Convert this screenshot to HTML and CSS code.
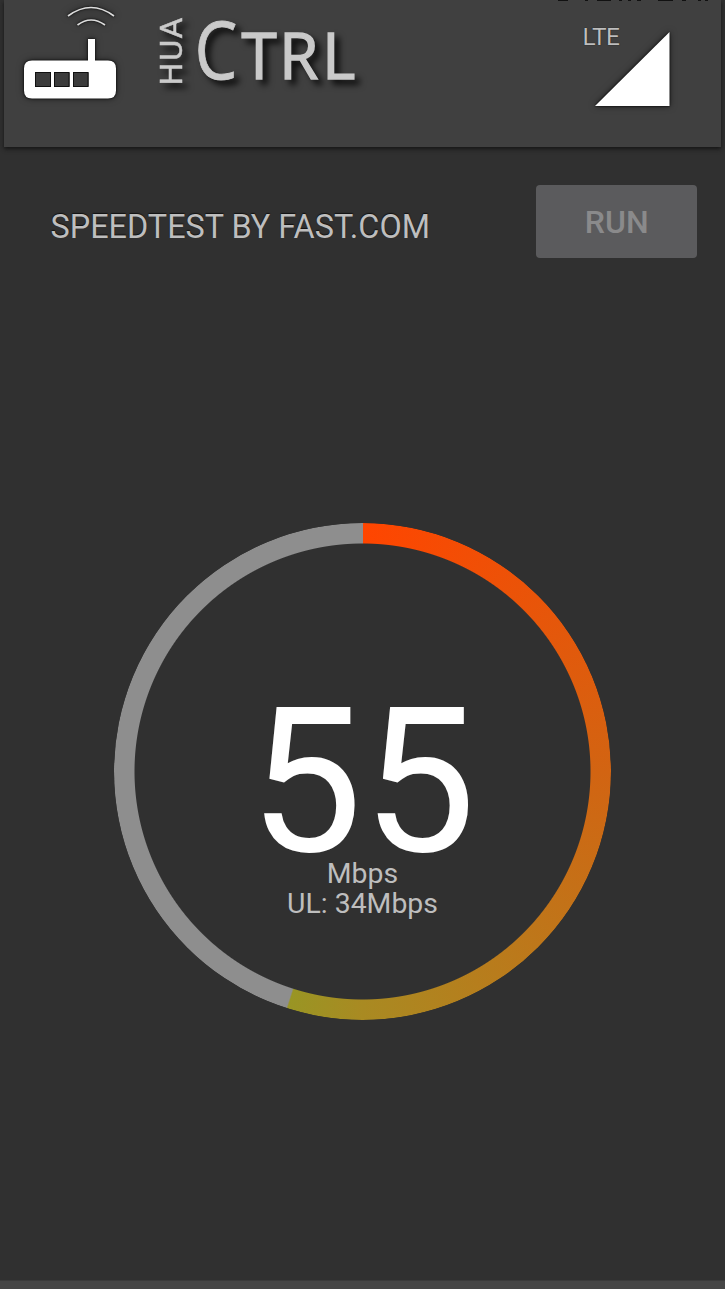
FILE: index.html
```
<!DOCTYPE html>
<html lang="en">

<head>
    <meta charset="UTF-8">
    <meta name="viewport" content="width=device-width, initial-scale=1.0">
    <title>HUA Ctrl</title>
    <link rel="stylesheet" href="styles.css">
</head>

<body>
    <header class="header">
        <!-- Router icon -->
        <svg class="router" width="112" height="112" viewBox="8 0 112 112">
            <g class="waves">
                <path d="M68 16Q91 -1 114 16" />
                <path d="M77.500 25Q91 15 105 25" />
            </g>
            <rect x="88" y="39" width="7" height="24" />
            <path fill-rule="evenodd" d="M32 60.500H108Q116 60.500 116 68.500V90.500Q116 98.500 108 98.500H32Q24 98.500 24 90.500V68.500Q24 60.500 32 60.500ZM35 72V87H51V72ZM54 72V87H69.500V72ZM73 72V87H88.500V72Z" />
            <path class="ports" d="M35.500 72.500H50.500V86.500H35.500ZM54.500 72.500H69V86.500H54.500ZM73.500 72.500H88V86.500H73.500Z" />
        </svg>

        <!-- Logo -->
        <svg class="logo" width="230" height="112" viewBox="150 0 230 112">
            <text class="hua" transform="translate(182 85.500) rotate(-90)" textLength="68">HUA</text>
            <text class="big" transform="translate(194.500 79) scale(.84 1)">C</text>
            <text class="small" y="79" x="241.500 279 322">TRL</text>
        </svg>

        <!-- Network status -->
        <div class="network">
            <span class="type">LTE</span>
            <svg class="signal" width="96" height="112" viewBox="584 0 96 112">
                <path d="M669.500 32V106H595Z" />
            </svg>
        </div>
        <svg class="statusbar" width="152" height="1" viewBox="0 0 152 1">
            <path d="M0 .500H10M27 .500H30M39 .500H53M61 .500H64M70 .500H73M79 .500H83M100 .500H115M124 .500H128M140 .500H143M147 .500H150" />
        </svg>
    </header>

    <main>
        <div class="titlebar">
            <h1>SPEEDTEST BY FAST.COM</h1>
            <button id="runBtn" disabled>RUN</button>
        </div>

        <!-- Speed gauge -->
        <div class="gauge">
            <div class="ring"></div>
            <div class="speed">55</div>
            <div class="unit">Mbps</div>
            <div class="unit">UL: 34Mbps</div>
        </div>
    </main>

    <footer class="bottombar"></footer>
</body>

</html>
```

FILE: styles.css
```
body {
    margin: 0;
    height: 1289px;
    display: flex;
    flex-direction: column;
    overflow: hidden;
    background-color: #303030;
    color: #bebebe;
    font-family: Roboto, sans-serif;
}

.header {
    height: 147px;
    margin: 0 4px;
    display: flex;
    align-items: flex-start;
    position: relative;
    background-color: #404040;
    box-shadow: 0 2px 4px #151515;
}
.router {
    margin-left: 4px;
    fill: #fff;
    filter: drop-shadow(0 0 1px #000) drop-shadow(0 0 3px rgba(0, 0, 0, 0.5));
}
.router .waves {
    fill: none;
    stroke: #ddd;
    stroke-width: 1.7;
}
.router .ports {
    fill: #3c3c3c;
    stroke: #111;
}

.logo {
    margin-left: 30px;
    fill: #cacaca;
    filter: drop-shadow(5px 5px 3px rgba(0, 0, 0, 0.8));
}
.logo .hua {
    font: 32px Roboto, sans-serif;
    stroke: #cacaca;
    stroke-width: 0.5;
}
.logo .big {
    font: 81px "Open Sans", sans-serif;
    stroke: #cacaca;
    stroke-width: 0.8;
}
.logo .small {
    font: 64px "Open Sans", sans-serif;
    stroke: #cacaca;
    stroke-width: 1.4;
}

.network {
    display: flex;
    margin-left: auto;
    margin-right: 41px;
}
.type {
    width: 1.5px;
    padding-top: 22px;
    font-size: 24.5px;
    line-height: 29px;
    letter-spacing: -0.5px;
    text-shadow: 0 0 1px #000;
}
.signal {
    fill: #fff;
    filter: drop-shadow(0 0 1px #000) drop-shadow(0 0 3px rgba(0, 0, 0, 0.5));
}
.statusbar {
    position: absolute;
    top: 0;
    left: 554px;
    stroke: #111;
}

/* Title and run button */
main {
    flex: 1;
}
.titlebar {
    display: flex;
    justify-content: space-between;
    align-items: center;
    padding: 38px 28px 0 50.5px;
}
h1 {
    margin: 11px 0 0;
    font-size: 32.4px;
    font-weight: 400;
    line-height: 40px;
    text-shadow: 0 -1px 1px #111;
}
#runBtn {
    width: 161.5px;
    height: 73px;
    padding: 1px 0 0 1px;
    border: none;
    border-radius: 4px;
    background-color: #5b5b5d;
    color: #8a8a8b;
    font: 500 32px Roboto, sans-serif;
}

/* Gauge */
.gauge {
    width: 497px;
    height: 498px;
    margin: 264px auto 0;
    position: relative;
    text-align: center;
}
.ring {
    position: absolute;
    inset: 0.5px 0 0.5px 0;
    border-radius: 50%;
    background: conic-gradient(from 0deg at 249px 50%, #ff4500 0, #d26412 25%, #a98a22 50%, #999524 54.9%, #8e8e8e 55%);
    mask: radial-gradient(circle, transparent 227.5px, #000 228.5px);
}
.speed {
    height: 153px;
    padding-top: 184px;
    font-size: 202px;
    line-height: 152px;
    color: #fff;
}
.unit {
    font-size: 28.4px;
    line-height: 30px;
}

.bottombar {
    height: 8px;
    background-color: #464646;
    border-top: 1px solid #3b3b3b;
}
```
